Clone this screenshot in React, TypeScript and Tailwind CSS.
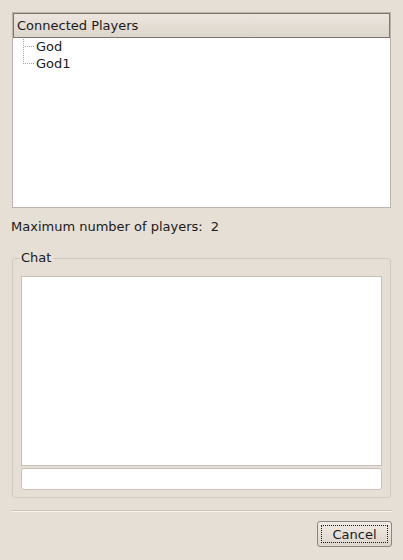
import React from 'react';

const font = { fontFamily: '"DejaVu Sans", "Liberation Sans", sans-serif' };

function TreeLines() {
  // dotted connectors of the tree view
  return (
    <svg className="absolute left-0 top-0" width="40" height="40" viewBox="0 0 40 40">
      <g fill="#a8a29b">
        {Array.from({ length: 13 }).map((_, i) => (
          <rect key={'v' + i} x={10} y={1 + i * 2} width={1} height={1} />
        ))}
        {Array.from({ length: 5 }).map((_, i) => (
          <rect key={'a' + i} x={12 + i * 2} y={8} width={1} height={1} />
        ))}
        {Array.from({ length: 5 }).map((_, i) => (
          <rect key={'b' + i} x={12 + i * 2} y={25} width={1} height={1} />
        ))}
      </g>
    </svg>
  );
}

export default function App() {
  const players = ['God', 'God1'];

  return (
    <div className="w-[403px] h-[560px] bg-[#e6dfd6] text-[13px] text-[#1a1a1a] flex flex-col overflow-hidden" style={font}>
      {/* Connected players tree */}
      <div className="mt-[12px] ml-[12px] w-[379px] h-[196px] border border-[#bcb4aa] bg-white flex flex-col">
        <div className="h-[25px] border border-[#7c766f] bg-gradient-to-b from-[#ece6df] to-[#ddd5cb] flex items-center pl-[3px] leading-none">
          Connected Players
        </div>
        <div className="relative">
          <TreeLines />
          {players.map((p) => (
            <div key={p} className="h-[17px] leading-[17px] pl-[23px]">
              {p}
            </div>
          ))}
        </div>
      </div>

      <div className="mt-[10px] ml-[11px] h-[18px] leading-[18px] flex gap-[8px]">
        <span>Maximum number of players:</span>
        <span>2</span>
      </div>

      {/* Chat frame */}
      <fieldset className="mt-[13px] ml-[12px] w-[379px] h-[249px] border border-[#d2cac0] rounded-[3px] px-[8px] pb-[8px] flex flex-col">
        <legend className="-ml-[2px] px-[2px] leading-[18px] h-[18px]">Chat</legend>
        <div className="mt-[9px] h-[190px] border border-[#c7bfb5] bg-white" />
        <div className="mt-[2px] h-[22px] border border-[#cac2b8] rounded-[3px] bg-white" />
      </fieldset>

      <div className="mt-[12px] ml-[11px] w-[381px] border-t border-[#cbc3b9] border-b border-b-[#f7f4f0]" />

      <div className="flex justify-end pr-[11px] mt-[9px]">
        <button className="w-[75px] h-[26px] border border-[#8b857e] rounded-[3px] bg-gradient-to-b from-[#f0ebe5] to-[#ddd6cd] p-[3px]">
          <span className="w-full h-full border border-dotted border-[#1a1a1a] flex items-center justify-center leading-none">
            Cancel
          </span>
        </button>
      </div>
    </div>
  );
}
